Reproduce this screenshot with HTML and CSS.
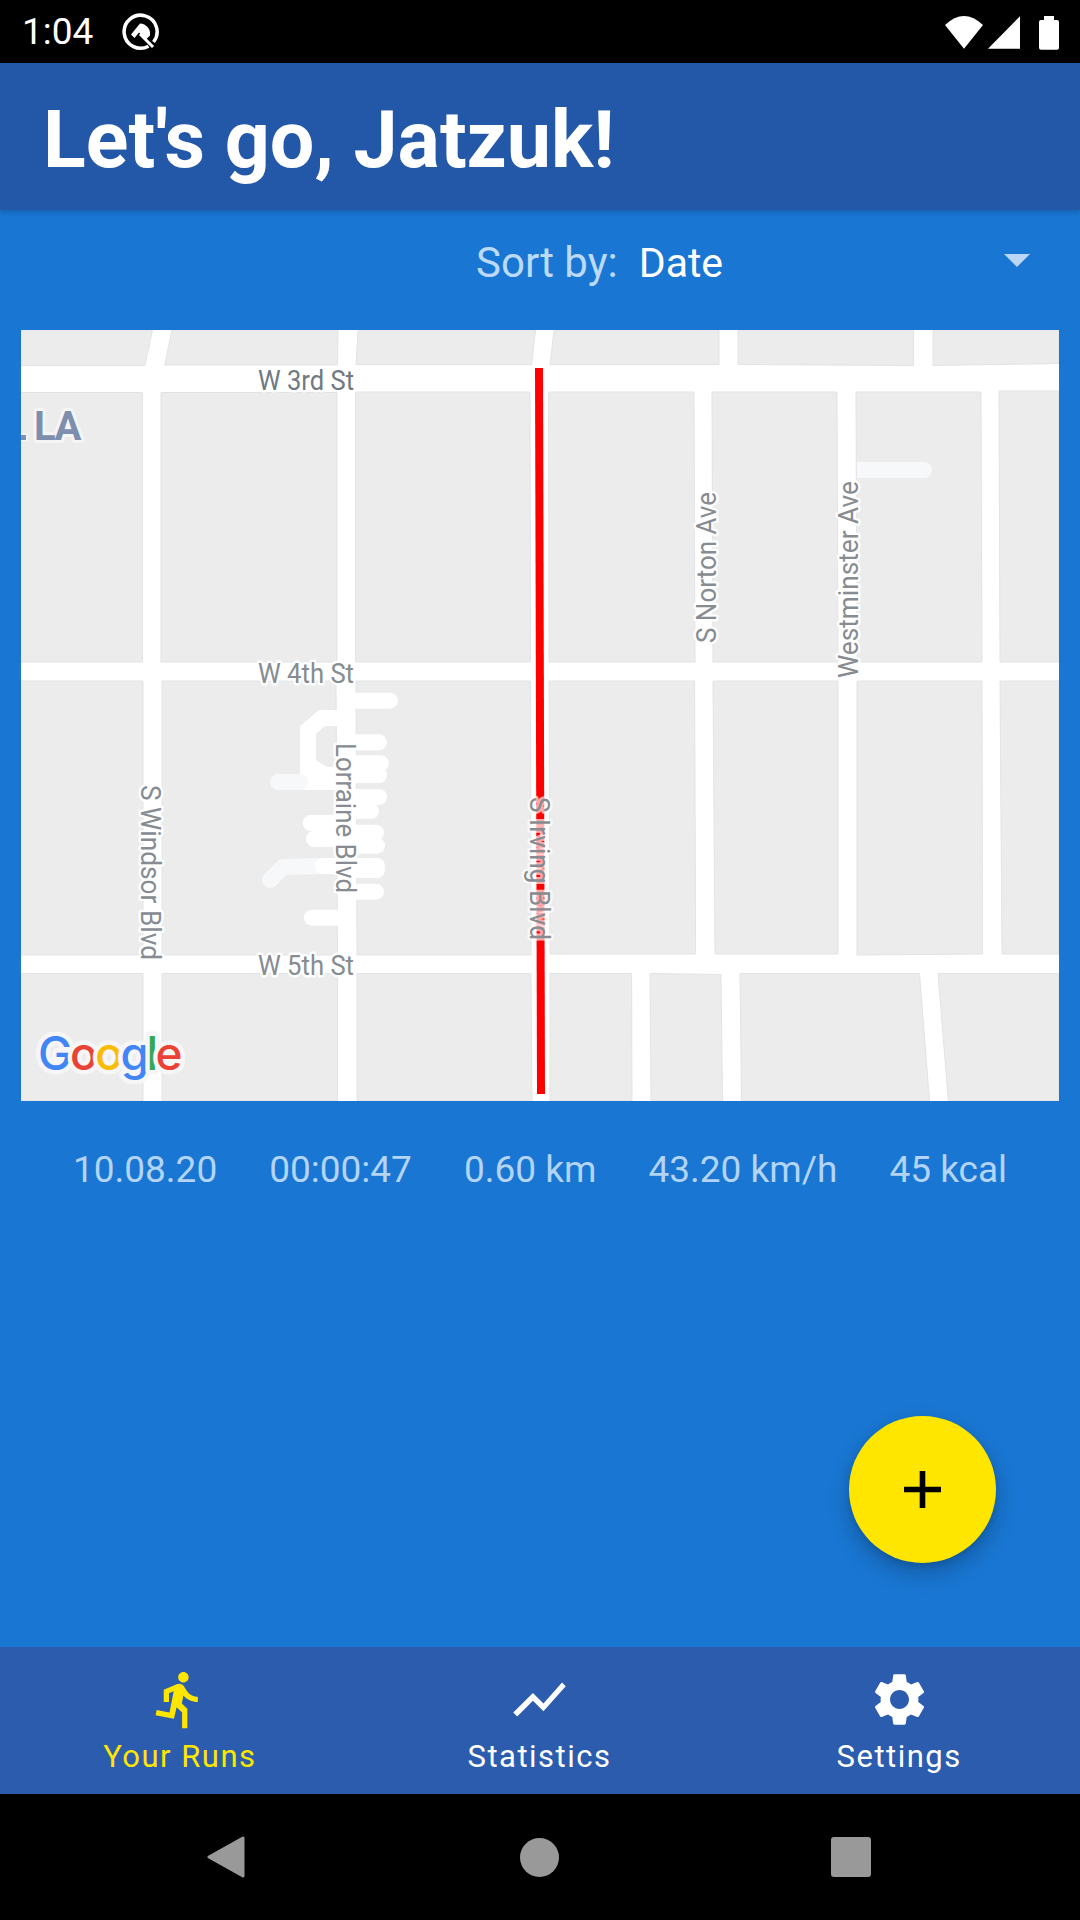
FILE: index.html
```html
<!DOCTYPE html>
<html lang="en">
<head>
<meta charset="utf-8">
<title>Your Runs</title>
<link rel="stylesheet" href="styles.css">
</head>
<body>
<div class="screen">
  <header class="status-bar">
    <span class="clock">1:04</span>
    <svg class="q-icon" viewBox="120 11 40 40" width="40" height="40">
      <path class="q-ring" d="M148.5 45.2A16.5 16.5 0 1 1 153.500 41"/>
      <path class="q-fill" d="M131 33.500L140 22.500A10.500 10.500 0 0 1 150 34.500L146 38.500L139 31.500L134.500 37Z"/>
      <path class="q-tail" d="M140 33L153 46"/>
    </svg>
    <div class="status-icons">
      <svg class="status-svg" viewBox="945 10 114 40" width="114" height="40">
        <path class="white" d="M945 23Q964 5 983 23L964 46.700Z"/>
        <path class="white" d="M988 46.700L1020 14.300V46.700Z"/>
        <path class="white" d="M1044 14H1054V18H1057A2 2 0 0 1 1059 20V45.700A2 2 0 0 1 1057 47.700H1041A2 2 0 0 1 1039 45.700V20A2 2 0 0 1 1041 18H1044Z"/>
      </svg>
    </div>
  </header>

  <div class="app-bar"><h1 class="title">Let's go, Jatzuk!</h1></div>

  <main class="content">
    <div class="sort-row">
      <span class="sort-label">Sort by:</span>
      <span class="sort-value">Date</span>
      <span class="sort-arrow"></span>
    </div>

    <svg class="map" viewBox="21 330 1038 771" width="1038" height="771">
      <rect class="road" x="21" y="330" width="1038" height="771"/>
      <g class="blocks">
        <polygon points="21,330 152.500,330 145,365.500 21,365.500"/>
        <polygon points="172,330 338,330 337.500,365 164.600,365"/>
        <polygon points="358,330 535.500,330 531.500,364.500 356,364.500"/>
        <polygon points="554,330 719,330 719,364.500 550,364.500"/>
        <polygon points="738,330 913.600,330 913.600,365.500 738,364.500"/>
        <polygon points="933,330 1059,330 1059,363.500 933,365.500"/>

        <polygon points="21,392.500 142.500,392.500 142.500,662 21,662"/>
        <polygon points="161,392.500 337,392.500 337,662 161,662"/>
        <polygon points="355.700,392 530,392 530.500,662 355.700,662"/>
        <polygon points="548.600,392 694,392 695,662 549,662"/>
        <polygon points="712,392 837,392 838,662 713,662"/>
        <polygon points="856,392 981,392 982,662 857,662"/>
        <polygon points="999,391 1059,391 1059,662 1000,662"/>

        <polygon points="21,681 143,681 143,955 21,955"/>
        <polygon points="162,681 336,681 337.500,955 162,955"/>
        <polygon points="356,681 530.600,681 531,955 357,955"/>
        <polygon points="549,681 694.600,681 695.600,954 550,954"/>
        <polygon points="713,681 838,681 838,954 715,954"/>
        <polygon points="857,681 982,681 982.500,954 857,955"/>
        <polygon points="1000,681 1059,681 1059,954 1002,954"/>

        <polygon points="21,973.500 143,973.500 143,1101 21,1101"/>
        <polygon points="162,973.500 337.500,973.500 337.500,1101 162,1101"/>
        <polygon points="357,973.500 531,973.500 532,1101 357,1101"/>
        <polygon points="550,973.500 631.600,973.500 632,1101 550,1101"/>
        <polygon points="650,973.500 721,974.500 722.500,1101 651,1101"/>
        <polygon points="740,973.500 919.500,973.500 929.500,1101 741.500,1101"/>
        <polygon points="938,973.500 1059,973.500 1059,1101 948.400,1101"/>
      </g>

      <g class="alley">
        <polyline class="alley-bend" points="340,718 322,718 308,730 308,775"/>
        <path class="alley-fill" d="M316 760L327 767H340V790H316Z"/>
        <path d="M300 782H340"/>
        <path d="M345 700.700H390"/>
        <path d="M345 742.300H379"/>
        <path d="M345 763.300H381"/>
        <path d="M345 775H379"/>
        <path d="M345 797H379"/>
        <path d="M345 811H371"/>
        <path d="M345 832.700H376"/>
        <path d="M345 845.700H377"/>
        <path d="M345 870H377"/>
        <path d="M345 891.700H376"/>
        <path d="M310.700 823H340"/>
        <path d="M314 839H340"/>
        <path d="M312 917.700H340"/>
      </g>
      <g class="alley alley-pale">
        <path d="M278 782H300"/>
        <polyline points="270,880 283,867 322,866"/>
      </g>
      <path class="alley-pale-fill" d="M857 462H924A8 8 0 0 1 924 478H857Z"/>
      <g class="alley">
        <path d="M322.700 866H340"/>
        <path d="M345 866H377"/>
      </g>

      <polygon class="route" points="535,368 543,368 545,1094 537,1094"/>

      <g class="labels">
        <text x="258" y="390" textLength="96" lengthAdjust="spacingAndGlyphs">W 3rd St</text>
        <text class="label-light" x="258" y="682.500" textLength="96" lengthAdjust="spacingAndGlyphs">W 4th St</text>
        <text class="label-light" x="258" y="975" textLength="96" lengthAdjust="spacingAndGlyphs">W 5th St</text>
        <text class="label-light" transform="translate(141 785) rotate(90)" textLength="175" lengthAdjust="spacingAndGlyphs">S Windsor Blvd</text>
        <text class="label-light" transform="translate(336 743) rotate(90)" textLength="150" lengthAdjust="spacingAndGlyphs">Lorraine Blvd</text>
        <text class="label-light label-over" transform="translate(530 797) rotate(90)" textLength="143" lengthAdjust="spacingAndGlyphs">S Irving Blvd</text>
        <text class="label-light" transform="translate(715.500 643) rotate(-90)" textLength="151" lengthAdjust="spacingAndGlyphs">S Norton Ave</text>
        <text class="label-light" transform="translate(858 678) rotate(-90)" textLength="197" lengthAdjust="spacingAndGlyphs">Westminster Ave</text>
        <rect class="area-clip" x="21" y="435" width="5" height="5"/>
        <text class="label-area" x="80" y="439.500" text-anchor="end">LA</text>
      </g>
      <text class="google" x="38" y="1070"><tspan class="g-blue">G</tspan><tspan class="g-red">o</tspan><tspan class="g-yellow">o</tspan><tspan class="g-blue">g</tspan><tspan class="g-green">l</tspan><tspan class="g-red">e</tspan></text>
    </svg>

    <div class="stats">
      <span>10.08.20</span>
      <span>00:00:47</span>
      <span>0.60 km</span>
      <span>43.20 km/h</span>
      <span>45 kcal</span>
    </div>

    <button class="fab" type="button" aria-label="Add run">
      <svg viewBox="0 0 37 37" width="37" height="37"><path d="M15.700 0H21.300V15.700H37V21.300H21.300V37H15.700V21.300H0V15.700H15.700Z"/></svg>
    </button>
  </main>

  <nav class="bottom-nav">
    <a class="tab tab-active">
      <svg class="tab-icon" viewBox="0 0 24 24" width="63" height="63"><path d="M13.490 5.480c1.100 0 2-.9 2-2s-.9-2-2-2-2 .9-2 2 .9 2 2 2zm-3.600 13.900l1-4.400 2.100 2v6h2v-7.500l-2.100-2 .6-3c1.300 1.500 3.300 2.500 5.500 2.500v-2c-1.900 0-3.500-1-4.300-2.400l-1-1.600c-.4-.6-1-1-1.700-1-.3 0-.5.1-.8.1l-5.200 2.200v4.700h2v-3.400l1.800-.7-1.600 8.100-4.900-1-.4 2 7 1.400z"/></svg>
      <span class="tab-label">Your Runs</span>
    </a>
    <a class="tab">
      <svg class="tab-icon" viewBox="0 0 24 24" width="63" height="63"><path d="M3.500 18.490l6-6.010 4 4L22 6.920l-1.410-1.410-7.090 7.970-4-4L2 16.990z"/></svg>
      <span class="tab-label">Statistics</span>
    </a>
    <a class="tab">
      <svg class="tab-icon" viewBox="0 0 24 24" width="63" height="63"><path d="M19.140 12.940c.04-.3.06-.61.06-.94 0-.32-.02-.64-.07-.94l2.030-1.580c.18-.14.23-.41.12-.61l-1.920-3.320c-.12-.22-.37-.29-.59-.22l-2.390.96c-.5-.38-1.030-.7-1.620-.94l-.36-2.540c-.04-.24-.24-.41-.48-.41h-3.840c-.24 0-.43.17-.47.41l-.36 2.540c-.59.24-1.130.57-1.620.94l-2.390-.96c-.22-.08-.47 0-.59.22L2.740 8.870c-.12.21-.08.47.12.61l2.030 1.580c-.05.3-.09.63-.09.94s.02.64.07.94l-2.030 1.580c-.18.14-.23.41-.12.61l1.920 3.320c.12.22.37.29.59.22l2.390-.96c.5.38 1.030.7 1.620.94l.36 2.540c.05.24.24.41.48.41h3.840c.24 0 .44-.17.47-.41l.36-2.540c.59-.24 1.130-.56 1.620-.94l2.390.96c.22.08.47 0 .59-.22l1.920-3.320c.12-.22.07-.47-.12-.61l-2.010-1.580zM12 15.600c-1.980 0-3.600-1.620-3.600-3.600s1.620-3.600 3.600-3.600 3.600 1.620 3.600 3.600-1.620 3.600-3.600 3.600z"/></svg>
      <span class="tab-label">Settings</span>
    </a>
  </nav>

  <footer class="nav-bar">
    <svg viewBox="0 0 38 42" width="38" height="42"><path class="nav-shape" d="M36 2V40L2 21Z"/></svg>
    <span class="nav-home"></span>
    <span class="nav-recent"></span>
  </footer>
</div>
</body>
</html>
```

FILE: styles.css
```css
* { box-sizing: border-box; }

html, body {
  margin: 0;
  padding: 0;
  background: #000;
}

.screen {
  width: 1080px;
  height: 1920px;
  display: flex;
  flex-direction: column;
  font-family: Roboto, "Noto Sans", sans-serif;
  overflow: hidden;
}

/* status bar */
.status-bar {
  flex: 0 0 63px;
  background: #000;
  color: #fff;
  display: flex;
  align-items: center;
  padding: 0 21px 0 22px;
}
.clock {
  font-size: 37px;
  line-height: 63px;
  width: 98px;
}
.q-icon { display: block; }
.q-ring { fill: none; stroke: #fff; stroke-width: 3.5; }
.q-fill { fill: #fff; }
.q-tail { fill: none; stroke: #fff; stroke-width: 3; }
.status-icons { margin-left: auto; display: flex; }
.status-svg { display: block; }
.white { fill: #fff; }

/* app bar */
.app-bar {
  flex: 0 0 147px;
  background: #2358a8;
  display: flex;
  align-items: center;
  padding: 6px 0 0 43px;
  box-shadow: 0 2px 5px rgba(0, 0, 0, .18);
  position: relative;
  z-index: 1;
}
.title {
  margin: 0;
  color: #fff;
  font-size: 79px;
  font-weight: 700;
  line-height: 92px;
}

/* content */
.content {
  flex: 1 1 auto;
  background: #1976d2;
  position: relative;
  display: flex;
  flex-direction: column;
}
.sort-row {
  flex: 0 0 120px;
  display: flex;
  align-items: center;
  padding: 0 50px 15px 476px;
  font-size: 42px;
}
.sort-label { color: #bbdafa; }
.sort-value { color: #fff; margin-left: 21px; font-size: 41px; }
.sort-arrow {
  margin-left: auto;
  margin-bottom: 4px;
  width: 0;
  height: 0;
  border-left: 13px solid transparent;
  border-right: 13px solid transparent;
  border-top: 13px solid #bbd6f5;
}

/* map */
.map {
  display: block;
  flex: 0 0 771px;
  margin: 0 21px;
}
.road { fill: #fff; }
.blocks polygon {
  fill: #ececec;
  stroke: #e2e3e7;
  stroke-width: 1;
}
.alley, .alley-pale {
  fill: none;
  stroke: #fff;
  stroke-width: 16;
  stroke-linecap: round;
  stroke-linejoin: round;
}
.alley-pale { stroke: #f7f8fa; }
.alley-bend { stroke-linejoin: miter; stroke-linecap: butt; }
.alley-fill { fill: #fff; stroke: none; }
.alley-pale-fill { fill: #f7f8fa; }
.route { fill: #f00; }

.labels text {
  font-family: Roboto, sans-serif;
  font-size: 28px;
  fill: #6f7a83;
  stroke: #fff;
  stroke-opacity: .92;
  stroke-width: 5px;
  stroke-linejoin: round;
  paint-order: stroke;
}
.labels .label-light { fill: #868c91; }
.labels .label-over { stroke-opacity: .68; }
.labels .label-area {
  font-size: 40px;
  font-weight: 700;
  fill: #7d8fac;
  stroke: #f6f6f8;
  stroke-width: 6px;
  letter-spacing: -1.5px;
}
.area-clip {
  fill: #7d8fac;
  stroke: #f6f6f8;
  stroke-width: 3px;
  paint-order: stroke;
}
.google {
  font-family: Inter, sans-serif;
  font-size: 46px;
  font-weight: 500;
  letter-spacing: -2.500px;
  stroke: #f6f6f7;
  stroke-width: 9px;
  stroke-linejoin: round;
  paint-order: stroke;
}
.g-blue { fill: #4285f4; }
.g-red { fill: #ea4335; }
.g-yellow { fill: #fbbc05; }
.g-green { fill: #34a853; }

/* stats */
.stats {
  display: flex;
  justify-content: center;
  gap: 52px;
  padding-top: 47px;
  font-size: 37px;
  line-height: 44px;
  color: #b3d4f5;
}

/* fab */
.fab {
  position: absolute;
  right: 84px;
  bottom: 84px;
  width: 147px;
  height: 147px;
  border: 0;
  padding: 0;
  border-radius: 50%;
  background: #ffe600;
  display: flex;
  align-items: center;
  justify-content: center;
  box-shadow: 0 10px 22px rgba(0, 0, 0, .22), 0 3px 6px rgba(0, 0, 0, .1);
}
.fab path { fill: #000; }

/* bottom nav */
.bottom-nav {
  flex: 0 0 147px;
  background: #2b5cae;
  display: flex;
  padding: 21px 1px 0 0;
}
.tab {
  flex: 1 1 0;
  display: flex;
  flex-direction: column;
  align-items: center;
  color: #fff;
}
.tab-active { color: #ffe600; }
.tab-icon { display: block; }
.tab-icon path { fill: currentColor; }
.tab-label {
  font-size: 31px;
  line-height: 36px;
  margin-top: 8px;
  letter-spacing: 1.500px;
}

/* system nav */
.nav-bar {
  flex: 0 0 126px;
  background: #000;
  display: flex;
  align-items: center;
  justify-content: center;
  padding-right: 3px;
}
.nav-bar svg { display: block; }
.nav-shape { fill: #999; stroke: #999; stroke-width: 3; stroke-linejoin: round; }
.nav-home {
  width: 39px;
  height: 39px;
  margin-left: 275px;
  border-radius: 50%;
  background: #999;
}
.nav-recent {
  width: 40px;
  height: 40px;
  margin-left: 272px;
  border-radius: 3px;
  background: #999;
}
```
